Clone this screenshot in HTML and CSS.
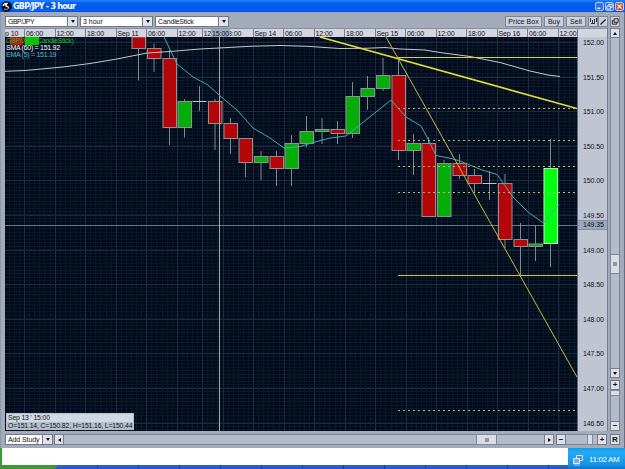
FILE: index.html
```html
<!DOCTYPE html>
<html lang="en">
<head>
<meta charset="utf-8">
<title>GBP/JPY - 3 hour</title>
<link rel="stylesheet" href="styles.css">
</head>
<body>
<header class="titlebar">
  <svg class="logo" width="11" height="11" viewBox="0 0 11 11"><circle cx="5.5" cy="5.5" r="5.2" fill="#050b18"/><path d="M2 5Q3 2 6 2.500L4.500 4.500L8 6.500" stroke="#fff" stroke-width="1.3" fill="none"/><path d="M3 8Q6 9.500 8 7" stroke="#9ab" fill="none"/></svg>
  <span class="title">GBP/JPY - 3 hour</span>
  <span class="wbtn"><svg viewBox="0 0 8 8"><path d="M1.500 6H5" stroke="#fff" stroke-width="1.5"/></svg></span>
  <span class="wbtn"><svg viewBox="0 0 8 8"><path d="M3 3V1.500H7V5H5.500M1 3.500H5V7H1Z" stroke="#fff" fill="none"/></svg></span>
  <span class="wbtn close"><svg viewBox="0 0 8 8"><path d="M1.500 1.500L6.500 6.500M6.500 1.500L1.500 6.500" stroke="#fff" stroke-width="1.4"/></svg></span>
</header>
<main class="window">
  <div class="toolbar">
    <div class="select s1"><span>GBP/JPY</span><i class="arrow down"></i></div>
    <div class="select s2"><span>3 hour</span><i class="arrow down"></i></div>
    <div class="select s3"><span>CandleStick</span><i class="arrow down"></i></div>
    <div class="actions">
      <button class="b1">Price Box</button><button class="b2">Buy</button><button class="b3">Sell</button>
      <button class="b4"><svg width="8" height="9" viewBox="0 0 8 9"><path d="M1.500 1V5M3.500 3V7M5.500 2V7M7.500 1V5M2 6.500H5" stroke="#333" fill="none"/></svg></button><button class="b5"><svg width="8" height="8" viewBox="0 0 8 8"><path d="M1.500 6.500L6.500 1.500" stroke="#111" stroke-width="1.2"/></svg></button>
      <button class="b6"><svg width="9" height="9" viewBox="0 0 9 9"><path d="M3.500 1.500H8V5.500H3.500ZM3 3.500H1.500V7.500H6.500V6" stroke="#111" fill="none"/></svg></button>
    </div>
  </div>
  <div class="middle">
    <div class="chartbox">
      <div class="times">
        <span class="t0">p 10</span><span>06:00</span><span>12:00</span><span>18:00</span><span>Sep 11</span><span>06:00</span><span class="tshort">12:00</span><span class="tgap">12</span><span>Sep 14</span><span>06:00</span><span>12:00</span><span>18:00</span><span>Sep 15</span><span>06:00</span><span>12:00</span><span>18:00</span><span>Sep 16</span><span>06:00</span><span class="tlast">12:00</span>
        <b class="t18">3:00</b><b class="tnow">15:00</b>
      </div>
      <div class="plotrow">
        <div class="plot">
          <svg id="chart" width="572" height="394" viewBox="5 37 572 394"></svg>
          <div class="legend"><div class="l1"><i class="red"></i><i class="green"></i><span>GBP/JPY (CandleStick)</span></div><div class="l2">SMA (60) = 151.92</div><div class="l3">EMA (5) = 151.19</div></div>
          <div class="tip"><div>Sep 13 ' 15:00</div><div>O=151.14, C=150.82, H=151.16, L=150.44</div></div>
        </div>
        <div class="prices">
          <span>152.00</span><span>151.50</span><span>151.00</span><span>150.50</span><span>150.00</span><span>149.50</span><span>149.00</span><span>148.50</span><span>148.00</span><span>147.50</span><span>147.00</span><span>146.50</span>
          <b>149.35</b>
        </div>
      </div>
    </div>
    <div class="vbar">
      <div class="cell"><i class="arrow up"></i></div><div class="track v1"></div><div class="thumb"><i></i></div><div class="track v2"></div><div class="cell"><i class="arrow down"></i></div>
      <div class="cell zoomin">+</div><div class="knob"></div><div class="track v3"></div><div class="cell">−</div>
    </div>
  </div>
  <div class="bottom">
    <div class="select study"><span>Add Study</span><i class="arrow down"></i></div>
    <div class="cell"><i class="arrow left"></i></div><div class="track h1"></div><div class="thumb"><i></i></div><div class="track h2"></div><div class="cell"><i class="arrow right"></i></div>
    <div class="cell minus">−</div><div class="track h3"></div><div class="knob"></div><div class="track h4"></div><div class="cell">+</div><div class="cell reset">R</div>
  </div>
</main>
<footer class="taskbar">
  <div class="start"></div><div class="tasks"></div><div class="blank"></div>
  <div class="tray"><svg width="12" height="12" viewBox="0 0 12 12"><path d="M4.500 1.500H10.500V6.500H4.500Z" fill="#5c88cf" stroke="#d5e7ff"/><path d="M1.500 4.500H7.500V9.500H1.500Z" fill="#7ba9e4" stroke="#e5f0ff"/><path d="M2 11H8" stroke="#bcd"/></svg><span>11:02 AM</span></div>
</footer>
<script src="chart.js"></script>
</body>
</html>
```
FILE: styles.css
```css
* { box-sizing: border-box; }
body { margin: 0; width: 625px; height: 469px; overflow: hidden; display: flex; flex-direction: column; background: #a3abbb; font-family: "Liberation Sans", Arial, sans-serif; font-size: 7px; color: #111; }
svg { display: block; }
.titlebar { height: 12px; flex: none; display: flex; align-items: center; gap: 1px; padding: 0 1px; background: linear-gradient(#2585fa 0, #075ff0 3px, #0158e8 8px, #0762fb 11px, #0144c8); }
.title { flex: 1; color: #fff; font: bold 8px "DejaVu Sans", sans-serif; letter-spacing: -.75px; }
.wbtn { width: 9px; height: 9px; border: 1px solid #b9d0fa; border-radius: 2px; background: #316de5; }
.wbtn svg { width: 7px; height: 7px; }
.wbtn.close { background: #d94d2c; }
.window { height: 436px; flex: none; display: flex; flex-direction: column; padding: 4px 4px 0; background: #a3abbb; border-left: 1px solid #8e98ac; border-right: 1px solid #626d82; }
.toolbar { height: 12px; flex: none; display: flex; gap: 2px; }
.select { height: 11px; display: flex; background: #fff; border: 1px solid #6f7889; line-height: 10px; letter-spacing: 0; }
.select span { flex: 1; padding-left: 2px; white-space: nowrap; }
.select .arrow { width: 10px; border-left: 1px solid #6f7889; background: #e0e3eb; }
.s1 { width: 73px; letter-spacing: -.5px; } .s2 { width: 73px; } .s3 { width: 74px; letter-spacing: -.15px; }
.arrow { display: flex; align-items: center; justify-content: center; }
.arrow::before { content: ""; border: 2.500px solid transparent; }
.arrow.down::before { border-top: 3px solid #111; border-bottom: 0; }
.arrow.up::before { border-bottom: 3px solid #111; border-top: 0; }
.arrow.left::before { border-right: 3px solid #111; border-left: 0; }
.arrow.right::before { border-left: 3px solid #111; border-right: 0; }
.actions { margin-left: auto; display: flex; }
.actions button { height: 11px; padding: 0; margin: 0; border: 1px solid #7d8698; background: #ccd0dc; font: 7px/9px "Liberation Sans", sans-serif; letter-spacing: .05px; color: #111; display: flex; align-items: center; justify-content: center; }
.b1 { width: 37px; }
.actions .b2, .actions .b3 { width: 20px; margin-left: 2px; }
.actions .b4 { width: 10px; margin-left: 2px; }
.b5 { width: 10px; }
.actions .b6 { width: 10px; margin-left: 2px; }
.middle { height: 403px; flex: none; display: flex; }
.chartbox { width: 603px; flex: none; display: flex; flex-direction: column; border: 1px solid #747e92; border-left: 0; border-top: 0; }
.times { height: 9px; flex: none; display: flex; position: relative; background: #d3d6e0; border-top: 1px solid #8992a3; line-height: 9px; letter-spacing: -.1px; }
.times span { width: 30.500px; flex: none; border-left: 1px solid #777f8f; padding-left: 1px; overflow: hidden; white-space: nowrap; }
.times .t0 { width: 19px; border: 0; padding-left: 0; }
.times .tshort { width: 25px; }
.times .tgap { width: 51px; }
.times .tlast { width: 20px; border-right: 1px solid #777f8f; }
.times b { position: absolute; top: 0; height: 8px; font-weight: normal; }
.t18 { left: 223px; }
.times .tnow { left: 206px; width: 19px; background: #9daabf; text-align: center; }
.plotrow { display: flex; height: 394px; }
.plot { width: 572px; flex: none; position: relative; background: #020b1c; }
.legend { position: absolute; left: 1px; top: 0; color: #fff; font-size: 7px; line-height: 7px; letter-spacing: -.28px; white-space: nowrap; }
.l1 { position: relative; color: #28bb2e; }
.l1 span { position: relative; }
.l1 i { position: absolute; top: 0; height: 8px; }
.l1 .red { left: 4px; width: 13px; background: #b91509; }
.l1 .green { left: 19px; width: 14px; background: #00c500; }
.l2 { position: relative; }
.l3 { color: #55bfc3; }
.tip { position: absolute; left: 1px; bottom: 1px; width: 128px; height: 17px; background: #d2d8e2; border: 1px solid #b5bdca; padding-left: 1px; line-height: 8px; white-space: nowrap; }
.tip div { height: 8px; font-size: 6.800px; letter-spacing: -.13px; }
.tip div + div { background: #b4bfcf; margin-left: -1px; padding-left: 1px; height: 7px; }
.prices { flex: 1; position: relative; display: flex; flex-direction: column; padding-top: 1px; background: #bfc5d3; border-left: 1px solid #5e687b; letter-spacing: -.1px; }
.prices span { height: 34.600px; flex: none; line-height: 10px; padding-left: 5px; overflow: hidden; }
.prices span:last-of-type { height: 9px; }
.prices b { position: absolute; left: 0; right: 0; top: 183px; height: 10px; padding-left: 5px; background: #98a7bd; border: solid #8492a9; border-width: 1px 0; font-weight: normal; line-height: 8px; }
.vbar { margin-left: 2px; width: 10px; display: flex; flex-direction: column; }
.cell { width: 10px; height: 10px; flex: none; border: 1px solid #727c8e; background: #dde0e9; display: flex; align-items: center; justify-content: center; font: bold 8px/8px "Liberation Sans", sans-serif; }
.track { background: #b3bac9; border: 1px solid #7e8799; }
.vbar .track { width: 10px; border-width: 0 1px; }
.v1 { height: 217px; } .v2 { height: 94px; } .v3 { height: 25px; }
.thumb, .knob { background: #d9dde7; border: 1px solid #808999; flex: none; display: flex; align-items: center; justify-content: center; }
.thumb i { width: 4px; height: 4px; background: #8f97a5; }
.vbar .thumb { width: 10px; height: 20px; }
.vbar .zoomin { margin-top: 2px; }
.vbar .knob { width: 10px; height: 6px; }
.bottom { margin-top: 3px; height: 11px; display: flex; }
.bottom .cell { height: 11px; }
.bottom .track { height: 11px; border-width: 1px 0; }
.study { width: 48px; margin-right: 1px; letter-spacing: -.1px; }
.bottom .h1 { width: 412px; } .bottom .thumb { width: 21px; } .h2 { width: 47px; }
.bottom .minus { margin-left: 2px; } .h3 { width: 21px; } .bottom .knob { width: 6px; } .h4 { width: 4px; }
.bottom .reset { margin-left: 3px; }
.taskbar { flex: 1; position: relative; display: flex; background: linear-gradient(#3a80ee, #2768df 16px, #2157c8); }
.start { width: 57px; background: #3e9a35; border-radius: 0 4px 4px 0; }
.tasks { flex: 1; background: repeating-linear-gradient(90deg, transparent 0 40px, #173f9c 40px 41px); }
.blank { position: absolute; left: 2px; top: 0; width: 566px; height: 17px; background: #fff; }
.tray { width: 57px; display: flex; align-items: center; gap: 5px; padding-left: 4px; padding-top: 2px; background: linear-gradient(#149bed, #20adf4 4px, #1492e7 17px, #0c72ce); color: #fff; font: 8px "Liberation Sans", sans-serif; letter-spacing: -.35px; white-space: nowrap; }
.tray svg { flex: none; }
```
FILE: chart.js
```js
// Each candle: center, wick top, wick bottom, body top, body bottom, colour
const candles = [
  [138.5,37,80.5,37,48.5,'r'],[154,43.5,72,48.5,58.5,'r'],[169.5,50,145,58.5,127.5,'r'],[184.5,99,137.5,101.5,127.5,'g'],
  [199.5,86,111,101.5,101.5,'d'],[215,99,150,101.5,123.5,'r'],[230.5,118,154,123.5,138.5,'r'],[245.5,138,177.5,138.5,162.5,'r'],
  [261,151,180,156.5,162.5,'g'],[276.5,151,186,156.5,168.5,'r'],[291.5,135,186,143.5,168.5,'g'],[306.5,116,147.5,131.5,143.5,'g'],
  [322,118,144,129.5,131.5,'g'],[337.5,121,144,129.5,133.5,'r'],[352.5,82,138,96.5,133.5,'g'],[367.5,76,110,88.5,96.5,'g'],
  [383,58,91,75.5,88.5,'g'],[398.5,58,160,75.5,150.5,'r'],[413.5,134,175,143.5,150.5,'g'],[428.5,137,217,143.5,216.5,'r'],
  [444,160,217,163.5,216.5,'g'],[459.5,154,179,163.5,175.5,'r'],[474.5,169,192,175.5,183.5,'r'],[489.5,171,200,183.5,183.5,'d'],
  [505,174,248,183.5,239.5,'r'],[520.5,223,275,239.5,246.5,'r'],[535.5,225,261,244,246.5,'g'],[550.5,139,267,168.5,243.5,'l']
];
const fills = { r: '#b40508', g: '#05ad0b', l: '#00ff12', d: '#bbb' };
const out = [];
const line = (x1, y1, x2, y2, color, w = 1, extra = '') =>
  out.push(`<line x1="${x1}" y1="${y1}" x2="${x2}" y2="${y2}" stroke="${color}" stroke-width="${w}" ${extra}/>`);
const crisp = 'shape-rendering="crispEdges"';

for (let x = 9.3; x < 577; x += 5.09) line(x, 37, x, 431, '#0b1829', 1, crisp);
for (let y = 38.5; y < 431; y += 3.46) line(5, y, 577, y, '#0b1829', 1, crisp);
for (let i = 0; i < 12; i++) line(5, 42.5 + i * 34.6, 577, 42.5 + i * 34.6, '#1c2b40', 1, crisp);
[24.5,55,85.5,116,146.5,177,202.5,223,253.5,284,314.5,345,375.5,406,436.5,467,497.5,528,558.5]
  .forEach(x => line(x, 37, x, 431, '#1c2b40', 1, crisp));

line(5, 225.5, 577, 225.5, '#6f788d', 1, crisp);
for (const [x, top, bottom, open, close, kind] of candles) {
  line(x, top, x, bottom, '#83878f');
  if (kind === 'd') line(x - 7, open, x + 7, open, '#c4c7cd');
  else out.push(`<rect x="${x - 6.5}" y="${open}" width="13.5" height="${close - open}" fill="${fills[kind]}" stroke="${kind === 'l' ? '#b5f5b4' : '#928f8f'}" stroke-width="1"/>`);
}
line(219.5, 37, 219.5, 431, '#a9aaac', 1, crisp);
const curve = (points, color) => out.push(`<polyline points="${points}" fill="none" stroke="${color}" stroke-width="1"/>`);
curve('5,71.3 25,70.5 63,67 90,63.5 117,59 147,53 170,51.5 200,49 219,48 250,46.3 280,45.5 307,46.3 340,48.5 365,48.3 385,47.5 400,49 425,50 440,52.5 470,56.5 500,62.5 530,71 548,75 560,76.5', '#c5c8cb');
curve('164,37 177,64 193,77 208,85 219,95 238,111 253,128 270,138 284,148 300,146.5 315,142 330,138 346,136 361,124 391,100 406,117 421,126 428,139 436,155.5 451,158.5 460,161 482,170 497,174.5 513,197 528,212 543.5,223 549,216 558.5,205', '#45a9b2');
out.push('<rect x="398" y="57" width="179" height="1" fill="#dcd62e"/>');
out.push('<rect x="398" y="275" width="179" height="1" fill="#cfcb22"/>');
[108.5,140.5,166.5,192,410].forEach(y => line(398, Math.floor(y) + .5, 577, Math.floor(y) + .5, '#bdbd5b', 1, 'stroke-dasharray="2 3" ' + crisp));
line(320, 37, 577, 108.5, '#e5dc35', 1.6);
line(386, 37, 577, 377, '#c2bd3b', 1);
document.getElementById('chart').innerHTML = out.join('');
```
